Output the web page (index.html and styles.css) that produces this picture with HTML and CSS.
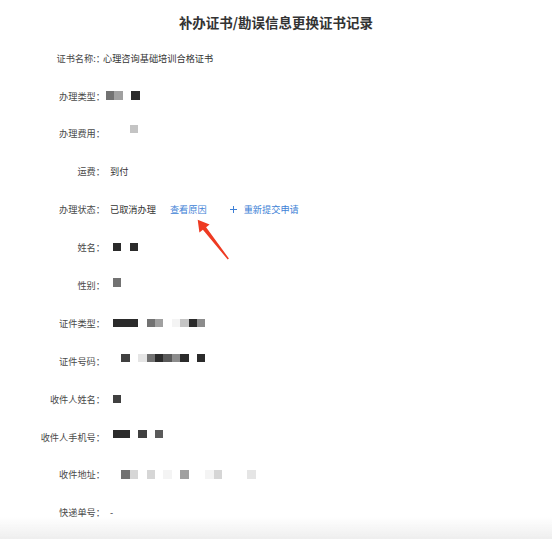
FILE: index.html
```html
<!DOCTYPE html>
<html lang="zh-CN">
<head>
  <meta charset="UTF-8">
  <meta name="viewport" content="width=device-width, initial-scale=1.0">
  <title>补办证书/勘误信息更换证书记录</title>
  <link rel="stylesheet" href="styles.css">
</head>
<body>

  <h1 class="title">补办证书/勘误信息更换证书记录</h1>

  <div class="info-list">
    <div class="row">
      <span class="label">证书名称:：</span>
      <span class="value tight">心理咨询基础培训合格证书</span>
    </div>

    <div class="row">
      <span class="label">办理类型：</span>
      <span class="mosaic shift"><i class="k4"></i><i class="k6"></i><i></i><i class="k1"></i></span>
    </div>

    <div class="row">
      <span class="label">办理费用：</span>
      <span class="mosaic up-lg"><i></i><i></i><i class="k7"></i></span>
    </div>

    <div class="row">
      <span class="label">运费：</span>
      <span class="value">到付</span>
    </div>

    <!-- Status row with actions -->
    <div class="row">
      <span class="label">办理状态：</span>
      <span class="value">已取消办理</span>
      <a class="link reason" href="#">查看原因</a>
      <a class="link resubmit" href="#">
        <svg class="plus" width="7" height="7" viewBox="0 0 7 7"><path d="M3.5 0v7M0 3.5h7" stroke="#3d7fd6" stroke-width="1"/></svg>
        重新提交申请
      </a>
    </div>

    <div class="row">
      <span class="label">姓名：</span>
      <span class="mosaic"><i class="k1"></i><i></i><i class="k1"></i></span>
    </div>

    <div class="row">
      <span class="label">性别：</span>
      <span class="mosaic up-sm"><i class="k4"></i></span>
    </div>

    <div class="row">
      <span class="label">证件类型：</span>
      <span class="mosaic"><i class="k1"></i><i class="k1"></i><i class="k1"></i><i></i><i class="k4"></i><i class="k6"></i><i></i><i class="k10"></i><i class="k7"></i><i class="k1"></i><i class="k5"></i></span>
    </div>

    <div class="row">
      <span class="label">证件号码：</span>
      <span class="mosaic up-md"><i></i><i class="k2"></i><i></i><i class="k9"></i><i class="k4"></i><i class="k1"></i><i class="k3"></i><i class="k5"></i><i class="k1"></i><i></i><i class="k1"></i></span>
    </div>

    <div class="row">
      <span class="label">收件人姓名：</span>
      <span class="mosaic"><i class="k2"></i></span>
    </div>

    <div class="row">
      <span class="label">收件人手机号：</span>
      <span class="mosaic up-sm"><i class="k1"></i><i class="k1"></i><i></i><i class="k2"></i><i></i><i class="k3"></i></span>
    </div>

    <div class="row">
      <span class="label">收件地址：</span>
      <span class="mosaic"><i></i><i class="k4"></i><i class="k8"></i><i></i><i class="k8"></i><i></i><i class="k10"></i><i></i><i class="k6"></i><i></i><i></i><i class="k10"></i><i class="k8"></i><i></i><i></i><i></i><i class="k9"></i></span>
    </div>

    <div class="row">
      <span class="label">快递单号：</span>
      <span class="value">-</span>
    </div>
  </div>

  <!-- Red annotation arrow -->
  <svg class="arrow" width="45" height="50" viewBox="0 0 45 50">
    <polygon points="7.7,4.8 19.6,9.5 16.1,12.3 38.9,43.5 37.7,44.5 12.9,14.7 9.4,17.5" fill="#ee3a22"/>
  </svg>

  <div class="bottom-fade"></div>

</body>
</html>
```

FILE: styles.css
```css
/* Base */
body {
  margin: 0;
  padding: 0;
  font-family: "Noto Sans CJK SC", "Noto Sans", sans-serif;
  background-color: #fff;
  color: #333;
}

.title {
  margin: 12px 0 0;
  font-size: 13.5px;
  line-height: 20px;
  font-weight: bold;
  text-align: center;
  color: #333;
}

.info-list {
  padding-top: 6.75px;
}

.row {
  display: flex;
  align-items: center;
  height: 37.9px;
  font-size: 9.2px;
  line-height: 14px;
}

.label {
  width: 105px;
  flex-shrink: 0;
  text-align: right;
  color: #4a4a4a;
}

.value {
  padding-left: 5px;
  color: #333;
}

.value.tight {
  padding-left: 0;
  margin-left: -2px;
}

.link {
  color: #3d7fd6;
  text-decoration: none;
}

.reason {
  margin-left: 14px;
}

.resubmit {
  display: flex;
  align-items: center;
  margin-left: 23px;
}

.plus {
  margin-right: 7px;
}

/* Redacted values */
.mosaic {
  display: flex;
  margin-left: 8px;
}

.mosaic i {
  display: block;
  width: 8.4px;
  height: 8.4px;
}

.mosaic.shift {
  margin-left: 1px;
}

.mosaic.up-sm {
  margin-bottom: 5px;
}

.mosaic.up-md {
  margin-bottom: 6px;
}

.mosaic.up-lg {
  margin-bottom: 9px;
}

.k1 { background-color: #2b2b2b; }
.k2 { background-color: #404040; }
.k3 { background-color: #5a5a5a; }
.k4 { background-color: #727272; }
.k5 { background-color: #8c8c8c; }
.k6 { background-color: #a0a0a0; }
.k7 { background-color: #c4c4c4; }
.k8 { background-color: #d6d6d6; }
.k9 { background-color: #e5e5e5; }
.k10 { background-color: #f4f4f4; }

.arrow {
  position: absolute;
  left: 190px;
  top: 215px;
}

.bottom-fade {
  position: fixed;
  left: 0;
  right: 0;
  bottom: 0;
  height: 22px;
  background: linear-gradient(to bottom, rgba(239, 239, 239, 0), #eeeeee);
  pointer-events: none;
}
```
